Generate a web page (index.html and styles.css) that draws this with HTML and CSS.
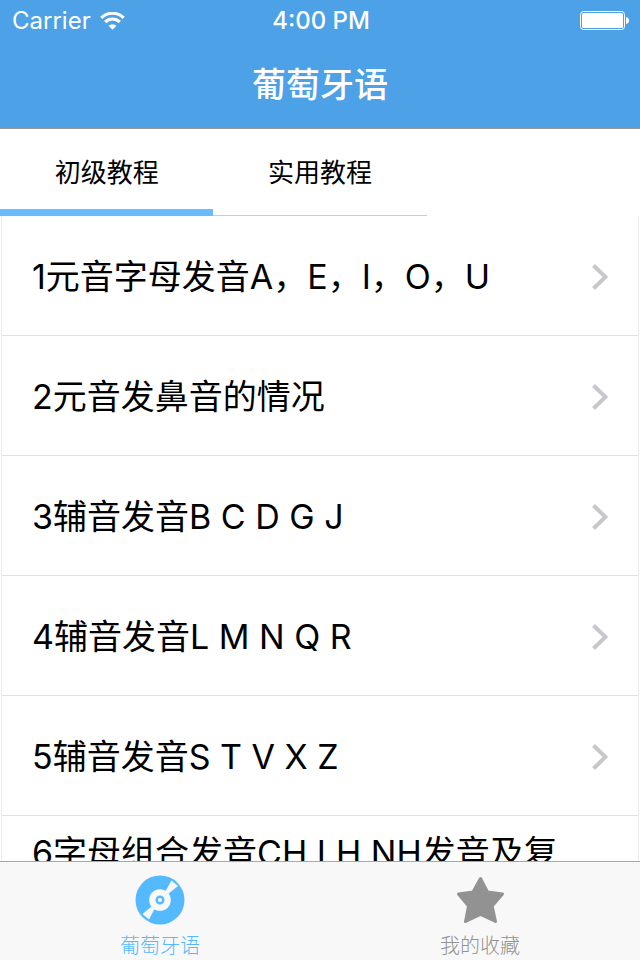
FILE: index.html
```html
<!DOCTYPE html>
<html lang="zh-CN">
<head>
    <meta charset="UTF-8">
    <meta name="viewport" content="width=device-width, initial-scale=1.0">
    <title>葡萄牙语</title>
    <link rel="stylesheet" href="styles.css">
</head>
<body>
    <header class="header">
        <div class="status-bar">
            <div class="carrier">
                <span>Carrier</span>
                <svg class="wifi" viewBox="0 0 25 18" aria-hidden="true">
                    <path d="M1.300 5.800a16 16 0 0 1 22.400 0" fill="none" stroke="#fff" stroke-width="3.200"/>
                    <path d="M5.200 10a10.400 10.400 0 0 1 14.600 0" fill="none" stroke="#fff" stroke-width="3.200"/>
                    <path d="M8.500 13.800a5.800 5.800 0 0 1 8 0l-4 4z" fill="#fff"/>
                </svg>
            </div>
            <div class="time">4:00 PM</div>
            <div class="power">
                <svg class="battery" viewBox="0 0 50 20" aria-hidden="true">
                    <rect x=".5" y=".5" width="44" height="18" rx="3" fill="none" stroke="#fff"/>
                    <rect x="2" y="2" width="41" height="15" rx="1.500" fill="#fff"/>
                    <path d="M46 6q3 .5 3 3.500t-3 3.500z" fill="#fff"/>
                </svg>
            </div>
        </div>
        <h1 class="title">葡萄牙语</h1>
    </header>

    <nav class="tabs">
        <button class="tab active" type="button">初级教程</button>
        <button class="tab" type="button">实用教程</button>
    </nav>

    <main class="lessons">
        <a class="lesson" href="#1">
            <span class="lesson-name">1元音字母发音A，E，I，O，U</span>
            <svg class="arrow" viewBox="0 0 16 26" aria-hidden="true"><path d="M1.500 1.500L13.500 13L1.500 24.500"/></svg>
        </a>
        <a class="lesson" href="#2">
            <span class="lesson-name">2元音发鼻音的情况</span>
            <svg class="arrow" viewBox="0 0 16 26" aria-hidden="true"><path d="M1.500 1.500L13.500 13L1.500 24.500"/></svg>
        </a>
        <a class="lesson" href="#3">
            <span class="lesson-name">3辅音发音B C D G J</span>
            <svg class="arrow" viewBox="0 0 16 26" aria-hidden="true"><path d="M1.500 1.500L13.500 13L1.500 24.500"/></svg>
        </a>
        <a class="lesson" href="#4">
            <span class="lesson-name">4辅音发音L M N Q R</span>
            <svg class="arrow" viewBox="0 0 16 26" aria-hidden="true"><path d="M1.500 1.500L13.500 13L1.500 24.500"/></svg>
        </a>
        <a class="lesson" href="#5">
            <span class="lesson-name">5辅音发音S T V X Z</span>
            <svg class="arrow" viewBox="0 0 16 26" aria-hidden="true"><path d="M1.500 1.500L13.500 13L1.500 24.500"/></svg>
        </a>
        <a class="lesson" href="#6">
            <span class="lesson-name two-lines">6字母组合发音CH LH NH发音及复</span>
            <svg class="arrow" viewBox="0 0 16 26" aria-hidden="true"><path d="M1.500 1.500L13.500 13L1.500 24.500"/></svg>
        </a>
    </main>

    <nav class="bottom-bar">
        <a class="bottom-item active" href="#lessons">
            <svg class="icon" viewBox="0 0 50 50" aria-hidden="true">
                <circle cx="25" cy="25" r="24.500" fill="#54b9fe"/>
                <path d="M30 17L36.500 5.500L43 11L33 19zM17 31L7.500 39L14 44.500L20 33z" fill="#f8f8f8"/>
                <circle cx="25" cy="25" r="10.800" fill="#f8f8f8"/>
                <circle cx="25" cy="25" r="3.300" fill="none" stroke="#54b9fe" stroke-width="2.400"/>
            </svg>
            <span>葡萄牙语</span>
        </a>
        <a class="bottom-item" href="#favorites">
            <svg class="icon" viewBox="0 0 50 50" aria-hidden="true">
                <path d="M25.500 3.500L32.500 17L47.500 19L37.200 31L40.500 46.500L25.500 39.500L10.500 46.500L13.500 31L3.500 19L18 17z" fill="#929292" stroke="#929292" stroke-width="3" stroke-linejoin="round"/>
            </svg>
            <span>我的收藏</span>
        </a>
    </nav>
</body>
</html>
```
FILE: styles.css
```css
* {
    box-sizing: border-box;
}

body {
    display: flex;
    flex-direction: column;
    height: 100vh;
    margin: 0;
    background-color: #fff;
    color: #000;
    font-family: Inter, "Noto Sans CJK SC", sans-serif;
}

a {
    color: inherit;
    text-decoration: none;
}

.header {
    flex: none;
    background-color: #4da1e6;
    border-bottom: 1px solid #999;
    color: #fff;
}

.status-bar {
    display: grid;
    grid-template-columns: 1fr auto 1fr;
    align-items: center;
    height: 41px;
    padding: 0 10px 0 12px;
    font-size: 24px;
}

.carrier {
    display: flex;
    align-items: center;
    gap: 9px;
}

.wifi {
    width: 25px;
    height: 18px;
}

.time {
    font-weight: 500;
}

.power {
    display: flex;
    justify-content: flex-end;
}

.battery {
    width: 50px;
    height: 20px;
}

.title {
    margin: 0;
    font-size: 34px;
    font-weight: 500;
    line-height: 87px;
    text-align: center;
}

.tabs {
    display: grid;
    flex: none;
    grid-template-columns: repeat(3, 1fr);
}

.tab {
    height: 87px;
    padding: 0 0 4px;
    border: 0;
    background: #fff;
    box-shadow: inset 0 -1px #ccc;
    color: #000;
    font-family: inherit;
    font-size: 26px;
}

.tab.active {
    box-shadow: inset 0 -7px #68bcfc;
}

.lessons {
    flex: 1;
    min-height: 0;
    margin: 0 1px;
    border: solid #ebebeb;
    border-width: 0 1px;
    overflow: hidden;
}

.lesson {
    display: flex;
    align-items: center;
    justify-content: space-between;
    height: 120px;
    padding: 3px 30px 0;
    border-bottom: 1px solid #e0e0e0;
}

.lesson-name {
    font-size: 34px;
    line-height: 48px;
    white-space: nowrap;
}

.two-lines {
    height: 96px;
}

.arrow {
    width: 16px;
    height: 26px;
    fill: none;
    stroke: #c7c7cc;
    stroke-width: 4;
}

.bottom-bar {
    display: flex;
    flex: none;
    height: 99px;
    background-color: #f8f8f8;
    border-top: 1px solid #a8a8a8;
}

.bottom-item {
    display: flex;
    flex: 1;
    flex-direction: column;
    align-items: center;
    gap: 8px;
    padding-top: 13px;
    color: #929292;
    font-size: 20px;
    font-weight: 300;
    line-height: 27px;
}

.bottom-item.active {
    color: #54b9fe;
}

.icon {
    flex: none;
    width: 50px;
    height: 50px;
}
```
